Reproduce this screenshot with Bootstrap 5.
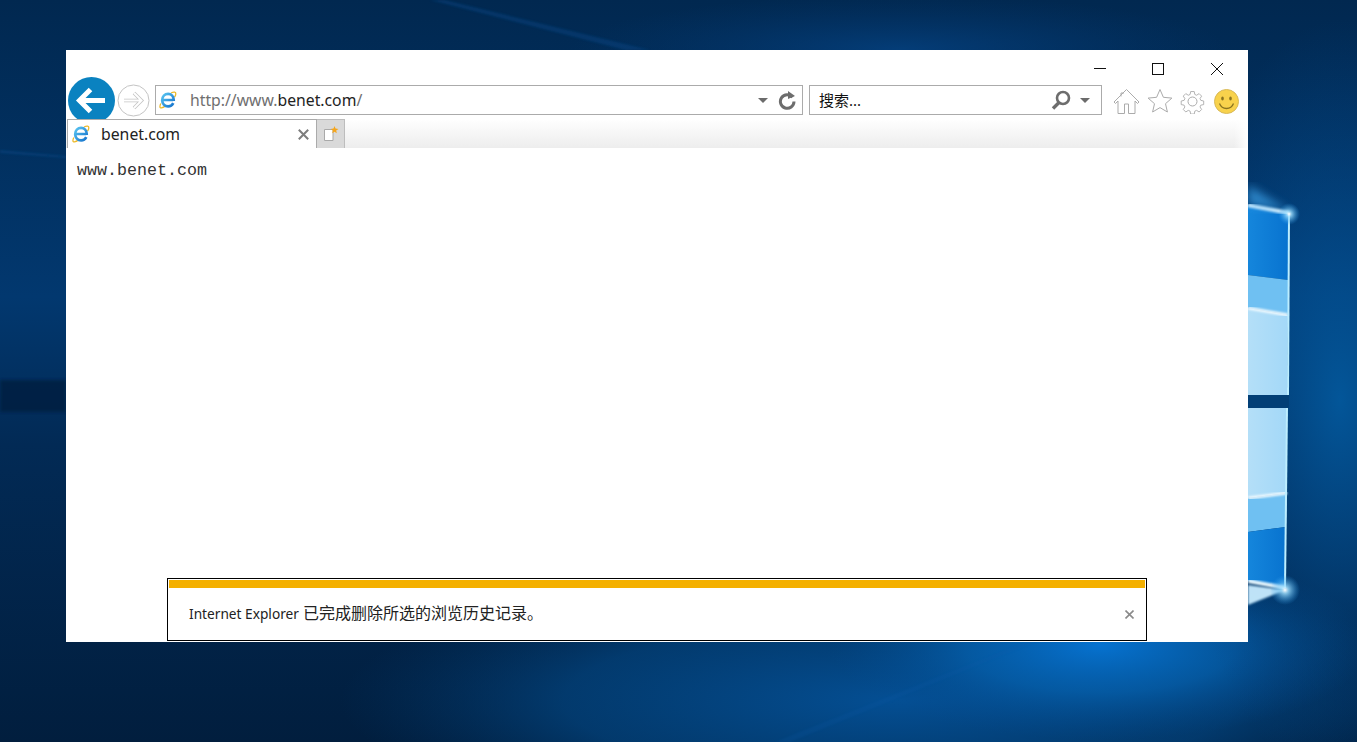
<!DOCTYPE html>
<html lang="zh-CN">
<head>
  <meta charset="utf-8">
  <title>benet.com</title>
  <link href="https://cdn.jsdelivr.net/npm/bootstrap@5.3.2/dist/css/bootstrap.min.css" rel="stylesheet">
  <style>
    body { background: #02305e; overflow: hidden; font-family: "Noto Sans", "Noto Sans CJK SC", sans-serif; }
    .desktop { width: 1357px; height: 742px; position: relative; overflow: hidden; }
    .wallpaper { position: absolute; left: 0; top: 0; }
    .ie-window { position: absolute; left: 66px; top: 50px; width: 1182px; height: 592px; background: #fff; }
    .caption-row { height: 35px; padding-top: 13px; }
    .caption-btn { width: 12px; height: 12px; display: block; }
    .caption-min { margin-right: 46px; }
    .caption-max { margin-right: 47px; }
    .caption-close { margin-right: 25px; }
    .nav-row { height: 30px; padding-left: 2px; }
    .back-btn { width: 47px; height: 47px; flex: none; }
    .fwd-btn { width: 33px; height: 33px; flex: none; margin-left: 2px; margin-right: 5px; }
    .url-box, .search-box { height: 30px; border: 1px solid #ababab; background: #fff; flex: none; font-size: 16px; }
    .url-box { width: 648px; margin-right: 6px; }
    .search-box { width: 293px; margin-right: 11px; }
    .url-icon { width: 18px; height: 18px; margin-left: 3px; margin-right: 13px; flex: none; }
    .url-grey { color: #6f6f6f; }
    .url-dark { color: #222; }
    .url-text { font-size: 15.75px; padding-top: 2px; }
    .search-text { color: #111; font-size: 15px; padding-left: 9px; }
    .drop-caret { width: 0; height: 0; border-left: 5px solid transparent; border-right: 5px solid transparent; border-top: 5px solid #6b6b6b; flex: none; }
    .tool-icon { flex: none; display: block; }
    .refresh-icon { margin-left: 10px; margin-right: 6px; }
    .search-icon { margin-right: 9px; }
    .search-caret { margin-right: 11px; }
    .tool-gap { margin-right: 7px; margin-top: 2px; }
    .tool-gap-wide { margin-right: 9px; margin-top: 2px; }
    .smile-icon { margin-top: 2px; }
    .tab-strip { height: 29px; margin-top: 4px; padding-left: 1px; position: relative; z-index: 2;
      background: linear-gradient(to bottom, rgba(255,255,255,0) 0, #ededed 100%); }
    .tab-fade { width: 14px; background: linear-gradient(to right, rgba(255,255,255,0), #fff); margin-left: auto; }
    .page-tab { width: 250px; background: #fff; border: 1px solid #ababab; border-bottom: 0; font-size: 15.8px; color: #222; padding-left: 4px; }
    .tab-label { padding-top: 2px; }
    .tab-icon { width: 18px; height: 18px; margin-right: 11px; flex: none; }
    .tab-x { margin-left: auto; margin-right: 7px; display: block; }
    .new-tab { width: 28px; background: #d9d9d9; border-top: 1px solid #bdbdbd; border-right: 1px solid #bdbdbd; }
    .page-area { min-height: 0; }
    .page-text { font-family: "Liberation Mono", monospace; font-size: 16.67px; color: #333; padding: 11px 0 0 11px; line-height: 24px; }
    .notify-bar { width: 980px; height: 63px; margin: auto 0 1px 101px; border: 1px solid #000; padding: 1px; background: #fff; flex: none; }
    .notify-stripe { height: 8px; background: #f4b000; }
    .notify-text { color: #222; padding-left: 20px; padding-right: 11px; padding-bottom: 2px; }
    .notify-latin { font-size: 13.7px; }
    .notify-cjk { font-size: 16px; }
    .notify-x { margin-left: auto; margin-top: 3px; display: block; }
  </style>
</head>
<body class="m-0">
<div class="desktop">
  <!-- wallpaper -->
  <svg class="wallpaper" width="1357" height="742" viewBox="0 0 1357 742">
    <defs>
      <linearGradient id="wpBase" x1="0" y1="0" x2="0" y2="1">
        <stop offset="0" stop-color="#012850"/>
        <stop offset=".4" stop-color="#02386f"/>
        <stop offset=".6" stop-color="#022a55"/>
        <stop offset="1" stop-color="#011e3e"/>
      </linearGradient>
      <radialGradient id="glowBottom"><stop offset="0" stop-color="#0672d0"/><stop offset=".5" stop-color="#0560ad" stop-opacity=".75"/><stop offset="1" stop-color="#034a8e" stop-opacity="0"/></radialGradient>
      <radialGradient id="glowWide"><stop offset="0" stop-color="#044f94"/><stop offset=".6" stop-color="#034580" stop-opacity=".7"/><stop offset="1" stop-color="#02386a" stop-opacity="0"/></radialGradient>
      <radialGradient id="glowRight"><stop offset="0" stop-color="#03589c" stop-opacity=".95"/><stop offset="1" stop-color="#03488a" stop-opacity="0"/></radialGradient>
      <radialGradient id="glowTop"><stop offset="0" stop-color="#043d78"/><stop offset="1" stop-color="#033468" stop-opacity="0"/></radialGradient>
      <radialGradient id="flare"><stop offset="0" stop-color="#fff"/><stop offset=".25" stop-color="#9fe0ff" stop-opacity=".8"/><stop offset="1" stop-color="#2b9cea" stop-opacity="0"/></radialGradient>
      <linearGradient id="paneBlue" x1="0" y1="0" x2="1" y2="0"><stop offset="0" stop-color="#1586dc"/><stop offset="1" stop-color="#0873cf"/></linearGradient>
      <linearGradient id="panePale" x1="0" y1="0" x2="1" y2="0"><stop offset="0" stop-color="#b4dff8"/><stop offset="1" stop-color="#a3d8f8"/></linearGradient>
      <filter id="soft"><feGaussianBlur stdDeviation="1.2"/></filter>
      <filter id="softer"><feGaussianBlur stdDeviation="5"/></filter>
      <filter id="barBlur"><feGaussianBlur stdDeviation="1.5"/></filter>
    </defs>
    <rect width="1357" height="742" fill="url(#wpBase)"/>
    <ellipse cx="900" cy="700" rx="560" ry="130" fill="url(#glowWide)"/>
    <ellipse cx="1100" cy="645" rx="270" ry="95" fill="url(#glowBottom)"/>
    <ellipse cx="1340" cy="400" rx="170" ry="380" fill="url(#glowRight)"/>
    <ellipse cx="900" cy="50" rx="330" ry="55" fill="url(#glowTop)"/>
    <rect x="0" y="380" width="66" height="32" fill="#021c3d" opacity=".75" filter="url(#barBlur)"/>
    <polygon points="430,0 445,0 650,50 625,50" fill="#07498a" opacity=".4" filter="url(#soft)"/>
    <polygon points="0,150 66,156 66,158 0,153" fill="#0a4f90" opacity=".4" filter="url(#soft)"/>
    <polygon points="1030,640 1040,640 790,742 775,742" fill="#0a5aa8" opacity=".18" filter="url(#soft)"/>
    <!-- logo panes -->
    <polygon points="1248,205 1289,213 1288,280 1248,275" fill="url(#paneBlue)"/>
    <polygon points="1248,275 1288,280 1288,315 1248,308" fill="#6fc0f2"/>
    <polygon points="1248,308 1288,315 1287,395 1248,395" fill="url(#panePale)"/>
    <polygon points="1248,408 1287,408 1287,493 1248,498" fill="url(#panePale)"/>
    <polygon points="1248,498 1287,493 1286,527 1248,532" fill="#6fc0f2"/>
    <polygon points="1248,532 1286,527 1285,587 1248,581" fill="url(#paneBlue)"/>
    <rect x="1248" y="395" width="41" height="13" fill="#023f76"/>
    <line x1="1248" y1="308" x2="1288" y2="315" stroke="#f2fbff" stroke-width="3" filter="url(#soft)"/>
    <line x1="1248" y1="498" x2="1287" y2="493" stroke="#f2fbff" stroke-width="3" filter="url(#soft)"/>
    <line x1="1248" y1="205" x2="1289" y2="213" stroke="#e8f8ff" stroke-width="4" filter="url(#soft)"/>
    <line x1="1248" y1="581" x2="1285" y2="588" stroke="#e8f8ff" stroke-width="4" filter="url(#soft)"/>
    <line x1="1289" y1="213" x2="1288" y2="395" stroke="#bdeeff" stroke-width="2"/>
    <line x1="1287" y1="408" x2="1285" y2="588" stroke="#bdeeff" stroke-width="2"/>
    <polygon points="1248,185 1289,211 1248,205" fill="#3da4ec" opacity=".7" filter="url(#softer)"/>
    <polygon points="1248,585 1285,590 1248,605" fill="#c9ecff" opacity=".95" filter="url(#soft)"/>
    <circle cx="1289" cy="214" r="11" fill="url(#flare)"/>
    <circle cx="1285" cy="590" r="15" fill="url(#flare)"/>
  </svg>

  <svg width="0" height="0" class="position-absolute">
    <defs>
      <linearGradient id="ieBlue" x1="0" y1="0" x2="1" y2="1"><stop offset="0" stop-color="#58c4f0"/><stop offset="1" stop-color="#1472cc"/></linearGradient>
      <symbol id="ieLogo" viewBox="0 0 18 18">
        <path d="M1.800 12.500C.4 15.500.6 17.200 2.500 16.800c1.400-.3 2.700-1 3.800-1.700" fill="none" stroke="#ecb92a" stroke-width="1.300"/>
        <path d="M12 2c3-1.400 5-1 4.800 1 0 1-.5 2-1.300 3.100" fill="none" stroke="#ecb92a" stroke-width="1.300"/>
        <path d="M3.600 9h10.600M14.300 12.200c-1.100 2-3 3.200-5.200 3.200-3.500 0-5.900-2.700-5.900-6.200 0-3.700 2.500-6.300 5.900-6.300 3.300 0 5.600 2.500 5.600 6.100v1" fill="none" stroke="url(#ieBlue)" stroke-width="2.700"/>
      </symbol>
    </defs>
  </svg>

  <div class="ie-window d-flex flex-column">
    <div class="caption-row d-flex justify-content-end flex-none">
      <svg class="caption-btn caption-min" viewBox="0 0 12 12"><path d="M0 5.500h12" stroke="#111" stroke-width="1"/></svg>
      <svg class="caption-btn caption-max" viewBox="0 0 12 12"><rect x=".5" y=".5" width="11" height="11" fill="none" stroke="#111"/></svg>
      <svg class="caption-btn caption-close" viewBox="0 0 12 12"><path d="M0 0l12 12M12 0L0 12" stroke="#111" stroke-width="1"/></svg>
    </div>

    <div class="nav-row d-flex align-items-center">
      <svg class="back-btn" viewBox="0 0 47 47">
        <circle cx="23.500" cy="23.500" r="23.500" fill="#0a82c0"/>
        <path d="M37 23.500H12M22.500 12.500l-11 11 11 11" fill="none" stroke="#fff" stroke-width="5"/>
      </svg>
      <svg class="fwd-btn" viewBox="0 0 33 33">
        <circle cx="16.500" cy="16.500" r="15.500" fill="#fff" stroke="#c4c4c4"/>
        <path d="M7 16.500h17M17 9l7.500 7.500L17 24" fill="none" stroke="#c4c4c4" stroke-width="3.600"/>
        <path d="M7 16.500h17M17 9l7.500 7.500L17 24" fill="none" stroke="#fff" stroke-width="2"/>
      </svg>
      <div class="url-box d-flex align-items-center">
        <svg class="url-icon"><use href="#ieLogo"/></svg>
        <span class="url-text"><span class="url-grey">http://www.</span><span class="url-dark">benet.com</span><span class="url-grey">/</span></span>
        <span class="drop-caret ms-auto"></span>
        <svg class="tool-icon refresh-icon" width="18" height="20" viewBox="0 0 18 20">
          <path d="M14.500 7.200a6.800 6.800 0 1 0 1.500 4.300" fill="none" stroke="#6d6d6d" stroke-width="3"/>
          <path d="M10 1l7 5-7 3z" fill="#6d6d6d"/>
        </svg>
      </div>
      <div class="search-box d-flex align-items-center">
        <span class="search-text">搜索...</span>
        <svg class="tool-icon search-icon ms-auto" width="20" height="20" viewBox="0 0 20 20">
          <circle cx="12" cy="8" r="6" fill="none" stroke="#6d6d6d" stroke-width="2.600"/>
          <path d="M8 12.500L2 18.500" stroke="#6d6d6d" stroke-width="3.400"/>
        </svg>
        <span class="drop-caret search-caret"></span>
      </div>
      <svg class="tool-icon tool-gap" width="27" height="27" viewBox="0 0 27 27">
        <path d="M13.500 1.500L1 14l1.500 1.500L5 13v12.500h6.500V16h4v9.500H22V13l2.500 2.500L26 14zM8 8.500V5h3" fill="#fff" stroke="#ababab"/>
      </svg>
      <svg class="tool-icon tool-gap" width="26" height="26" viewBox="0 0 26 26">
        <path d="M13 1.500l3.400 7.800 8.500.8-6.400 5.600 1.900 8.300L13 19.600 5.600 24l1.900-8.300L1.100 10.100l8.500-.8z" fill="#fff" stroke="#ababab"/>
      </svg>
      <svg class="tool-icon tool-gap-wide" width="25" height="25" viewBox="0 0 25 25">
        <path d="M10.500 1.500h4l.6 3.200 2 .9 2.800-1.800 2.800 2.800-1.800 2.700.9 2 3.200.7v4l-3.200.6-.9 2 1.800 2.800-2.800 2.800-2.800-1.800-2 .9-.6 3.200h-4l-.6-3.200-2-.9-2.800 1.800-2.800-2.800 1.800-2.800-.9-2-3.200-.6v-4l3.200-.7.9-2-1.800-2.700 2.800-2.800 2.800 1.800 2-.9z" fill="#fff" stroke="#ababab" transform="translate(1.200 1.200) scale(.9)"/>
        <circle cx="12.500" cy="12.500" r="4.500" fill="#fff" stroke="#ababab"/>
      </svg>
      <svg class="tool-icon smile-icon" width="25" height="25" viewBox="0 0 25 25">
        <circle cx="12.500" cy="12.500" r="12" fill="#f8d24c" stroke="#d8b958"/>
        <ellipse cx="8.500" cy="9.500" rx="1.300" ry="2" fill="#8a7420"/>
        <ellipse cx="16.500" cy="9.500" rx="1.300" ry="2" fill="#8a7420"/>
        <path d="M5.500 14.500c1.500 4 4 5 7 5s5.500-1 7-5" fill="none" stroke="#8a7420" stroke-width="1.300"/>
      </svg>
    </div>

    <div class="tab-strip d-flex flex-none">
      <div class="page-tab d-flex align-items-center">
        <svg class="tab-icon"><use href="#ieLogo"/></svg>
        <span class="tab-label">benet.com</span>
        <svg class="tab-x" width="11" height="11" viewBox="0 0 11 11"><path d="M.8.800l9.400 9.400M10.200.800L.8 10.200" stroke="#7d7d7d" stroke-width="2"/></svg>
      </div>
      <div class="new-tab d-flex align-items-center justify-content-center">
        <svg width="16" height="16" viewBox="0 0 16 16">
          <path d="M1.500 3.500h8.500v11H1.500z" fill="#fff" stroke="#a9a9a9"/>
          <path d="M11.500 0l1 2.500L15.500 3l-2.300 1.500.6 2.800-2.300-1.600-2.300 1.600.6-2.800L7.500 3l3-.5z" fill="#f4a51c"/>
        </svg>
      </div>
      <div class="tab-fade"></div>
    </div>

    <div class="page-area flex-grow-1 d-flex flex-column">
      <div class="page-text">www.benet.com</div>
      <div class="notify-bar d-flex flex-column">
        <div class="notify-stripe"></div>
        <div class="notify-text flex-grow-1 d-flex align-items-center">
          <span><span class="notify-latin">Internet Explorer</span> <span class="notify-cjk">已完成删除所选的浏览历史记录。</span></span>
          <svg class="notify-x" width="9" height="9" viewBox="0 0 9 9"><path d="M.5.500l8 8M8.500.500l-8 8" stroke="#8a8a8a" stroke-width="1.600"/></svg>
        </div>
      </div>
    </div>
  </div>
</div>
<script src="https://cdn.jsdelivr.net/npm/bootstrap@5.3.2/dist/js/bootstrap.bundle.min.js"></script>
</body>
</html>
